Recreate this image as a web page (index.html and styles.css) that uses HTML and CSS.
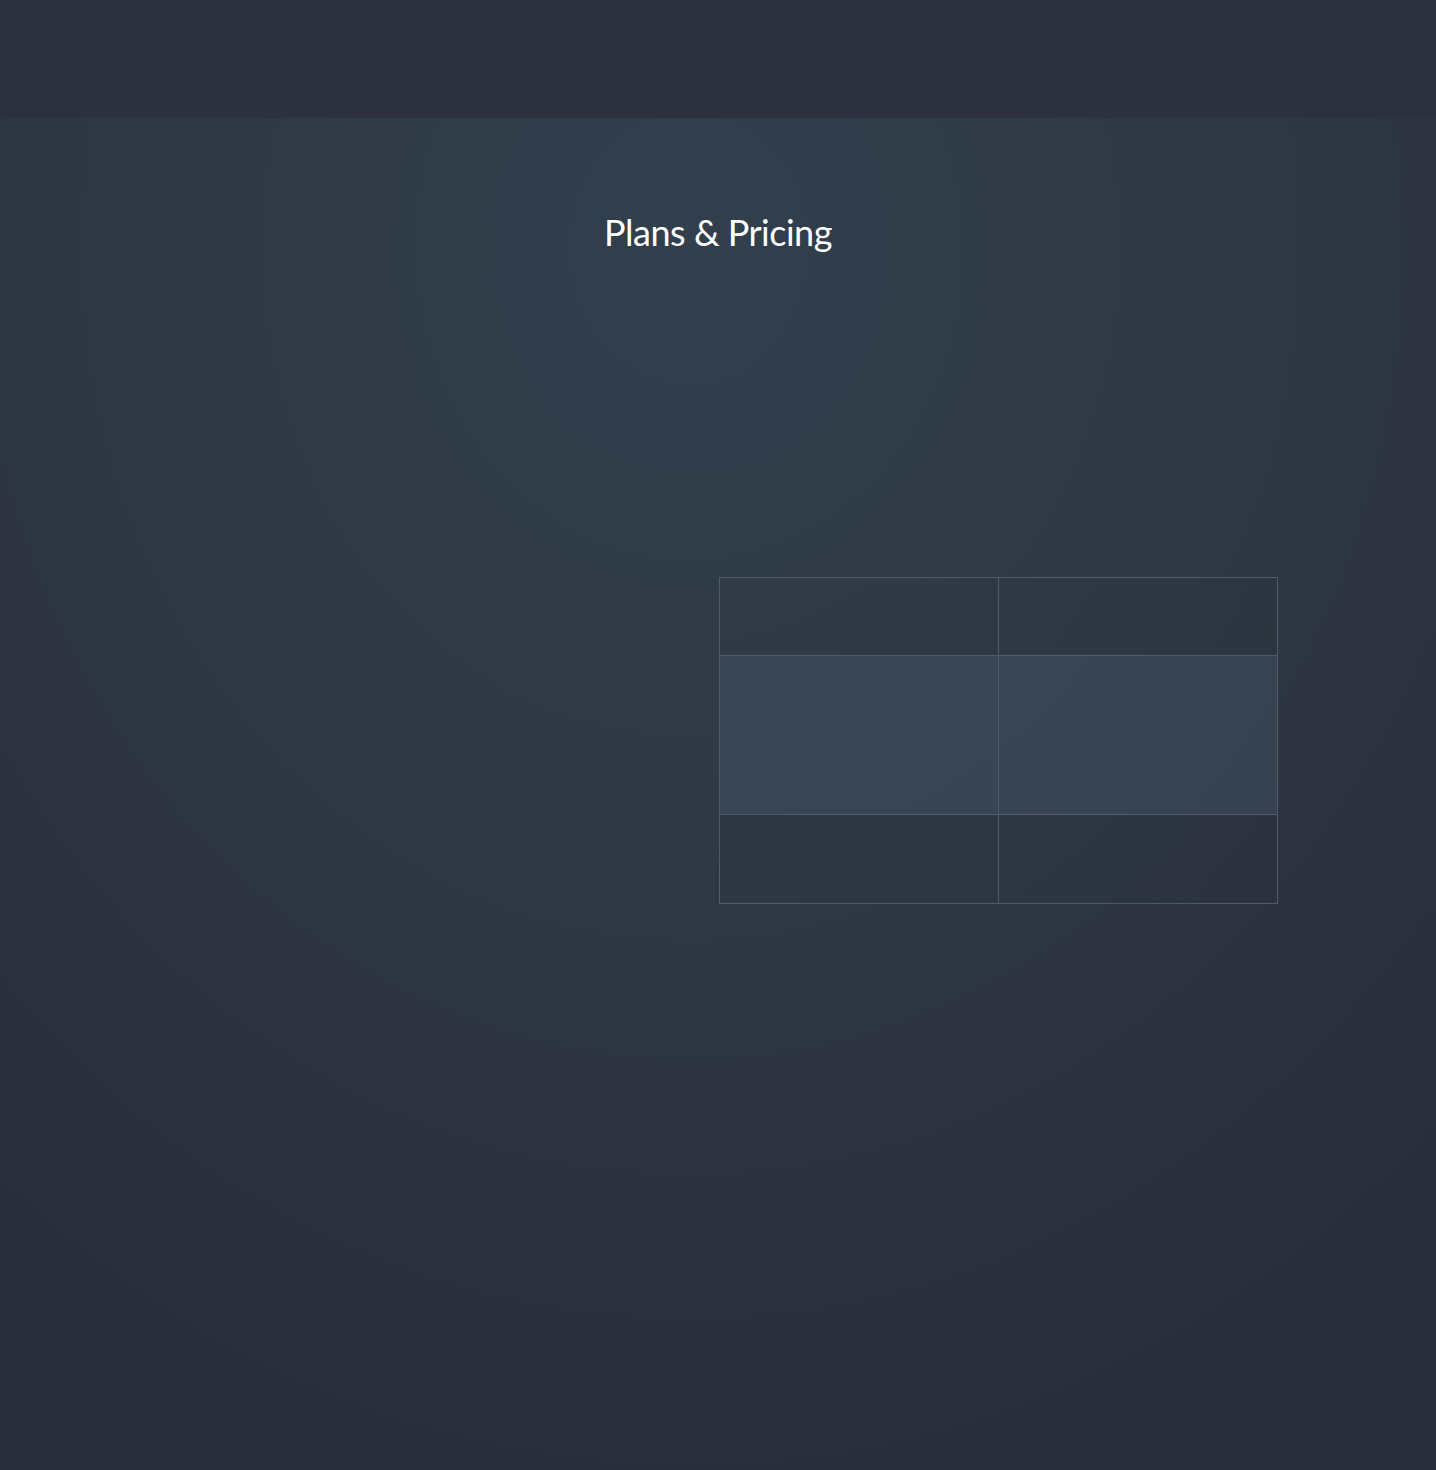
FILE: index.html
```html
<!DOCTYPE html>
<html lang="en">
<head>
<meta charset="utf-8">
<title>Plans &amp; Pricing</title>
<link rel="stylesheet" href="styles.css">
</head>
<body>
<header class="topbar"></header>
<main class="page">
  <h1 class="title">Plans &amp; Pricing</h1>
  <div class="content">
    <div class="left"></div>
    <div class="plans-wrap">
      <table class="plans">
        <tr class="row-head"><td></td><td></td></tr>
        <tr class="row-mid"><td></td><td></td></tr>
        <tr class="row-foot"><td></td><td></td></tr>
      </table>
    </div>
  </div>
</main>
</body>
</html>
```

FILE: styles.css
```css
html, body {
  margin: 0;
  padding: 0;
}
body {
  background: #282d39;
  font-family: Lato, "Open Sans", sans-serif;
  color: #fff;
  width: 1436px;
  min-height: 1470px;
}
.topbar {
  height: 118px;
  background: #2c313d;
}
.page {
  height: 1352px;
  background: radial-gradient(ellipse 1100px 1250px at 690px 130px, #323f4d 0%, #2f3945 45%, #2c333e 75%, #292e3a 100%);
  overflow: hidden;
}
.title {
  margin: 92px 0 0;
  text-align: center;
  font-weight: 400;
  font-size: 36px;
  line-height: 44px;
  letter-spacing: -0.5px;
  color: #ffffff;
}
.content {
  width: 1120px;
  margin: 323px auto 0;
  display: grid;
  grid-template-columns: 561px 559px;
}
.plans {
  border-collapse: collapse;
  width: 559px;
  table-layout: fixed;
}
.plans td {
  border: 1px solid #4e5b6c;
  padding: 0;
}
.row-head td {
  height: 77px;
  background: rgba(40, 45, 55, 0.08);
}
.row-mid td {
  height: 158px;
  background: rgba(74, 94, 114, 0.35);
}
.row-foot td {
  height: 88px;
  background: rgba(40, 45, 55, 0.05);
}
```
